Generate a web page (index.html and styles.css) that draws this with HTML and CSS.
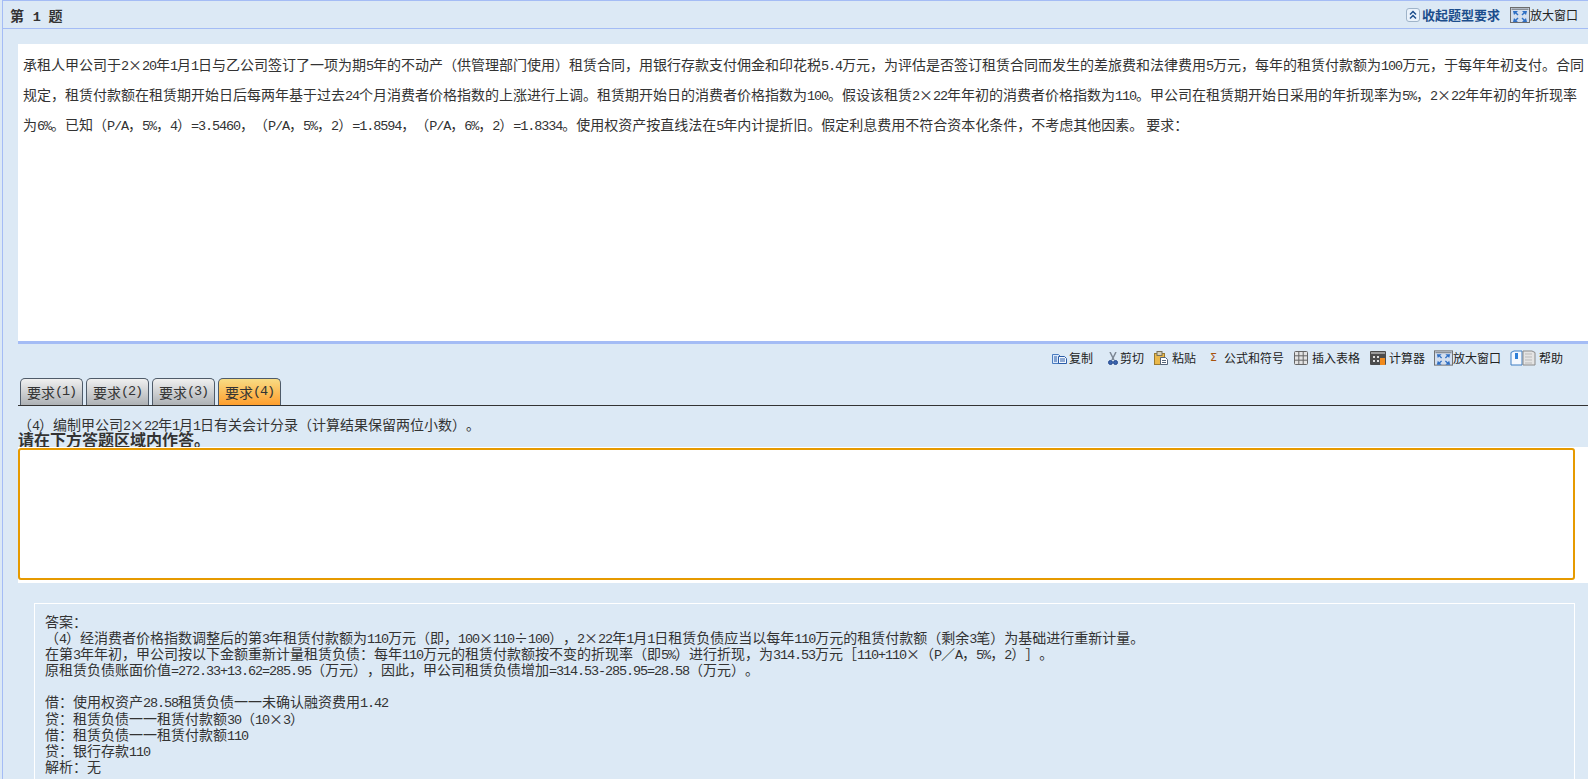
FILE: index.html
```html
<!DOCTYPE html>
<html lang="zh-CN">
<head>
    <meta charset="UTF-8">
    <title>第 1 题</title>
    <link rel="stylesheet" href="styles.css">
</head>
<body>
<div class="page">
    <div class="head">
        <div class="head-title">第 <span class="num-bold">1</span> 题</div>
        <div class="head-tools">
            <a class="collapse">
                <svg width="14" height="14" viewBox="0 0 14 14"><rect x=".5" y=".5" width="13" height="13" rx="2.5" fill="#eaf2fb" stroke="#9fb4c9"/><path d="M4 6.5 7 3.5 10 6.5M4 10.5 7 7.5 10 10.5" fill="none" stroke="#1c4e8c" stroke-width="1.5"/></svg>
                收起题型要求
            </a>
            <a class="tool tool-zoom-top">
                <svg width="20" height="16" viewBox="0 0 20 16"><rect x=".5" y=".5" width="19" height="15" fill="#d3deee" stroke="#6d6d6d"/><rect x="1.500" y="1.500" width="17" height="1.500" fill="#8a8f96"/><path d="M3 4h5l-1.500 1.500 2 2-1 1-2-2L4 8zM17 4h-5l1.500 1.500-2 2 1 1 2-2L16 8zM3 15h5l-1.500-1.500 2-2-1-1-2 2L4 11zM17 15h-5l1.500-1.500-2-2 1-1 2 2L16 11z" fill="#2f6fc4"/></svg>
                放大窗口
            </a>
        </div>
    </div>

    <div class="question">
        承租人甲公司于<span class="n">2</span>×<span class="n">20</span>年<span class="n">1</span>月<span class="n">1</span>日与乙公司签订了一项为期<span class="n">5</span>年的不动产（供管理部门使用）租赁合同，用银行存款支付佣金和印花税<span class="n">5.4</span>万元，为评估是否签订租赁合同而发生的差旅费和法律费用<span class="n">5</span>万元，每年的租赁付款额为<span class="n">100</span>万元，于每年年初支付。合同规定，租赁付款额在租赁期开始日后每两年基于过去<span class="n">24</span>个月消费者价格指数的上涨进行上调。租赁期开始日的消费者价格指数为<span class="n">100</span>。假设该租赁<span class="n">2</span>×<span class="n">22</span>年年初的消费者价格指数为<span class="n">110</span>。甲公司在租赁期开始日采用的年折现率为<span class="n">5%</span>，<span class="n">2</span>×<span class="n">22</span>年年初的年折现率为<span class="n">6%</span>。已知（<span class="n">P/A</span>，<span class="n">5%</span>，<span class="n">4</span>）<span class="n">=3.5460</span>，（<span class="n">P/A</span>，<span class="n">5%</span>，<span class="n">2</span>）<span class="n">=1.8594</span>，（<span class="n">P/A</span>，<span class="n">6%</span>，<span class="n">2</span>）<span class="n">=1.8334</span>。使用权资产按直线法在<span class="n">5</span>年内计提折旧。假定利息费用不符合资本化条件，不考虑其他因素。 要求：
    </div>

    <div class="toolbar">
        <a class="tool">
            <svg width="15" height="12" viewBox="0 0 15 12"><path d="M.5 2.500h6l2 2v7h-8z" fill="#dbe9fb" stroke="#4a7cc0"/><path d="M6.500 4.500h6l2 2v5h-8z" fill="#f4f8fe" stroke="#2a5ca8"/><path d="M8 7h5M8 9h5M2 5h3M2 7h3M2 9h3" stroke="#2a5ca8"/></svg>
            复制
        </a>
        <a class="tool tool-cut">
            <svg width="10" height="13" viewBox="0 0 10 13"><path d="M2 0 6 8M8 0 4 8" stroke="#7d8794" stroke-width="1.5"/><circle cx="2.500" cy="10.500" r="2" fill="#3a64b0" stroke="#24488c"/><circle cx="7.500" cy="10.500" r="2" fill="#3a64b0" stroke="#24488c"/></svg>
            剪切
        </a>
        <a class="tool tool-paste">
            <svg width="14" height="14" viewBox="0 0 14 14"><rect x=".5" y="2.500" width="10" height="11" fill="#eab84a" stroke="#9a7a30"/><rect x="3" y=".5" width="5" height="4" fill="#d9d2b8" stroke="#77705a"/><path d="M6.500 6.500h5l2 2v5h-7z" fill="#fff" stroke="#55657a"/><path d="M8 9.500h4M8 11.500h4" stroke="#55657a"/></svg>
            粘贴
        </a>
        <a class="tool tool-sum">
            <span class="sigma">Σ</span>
            公式和符号
        </a>
        <a class="tool tool-table">
            <svg width="14" height="14" viewBox="0 0 14 14"><rect x=".5" y=".5" width="13" height="13" rx="1" fill="#e3e3e3" stroke="#666"/><path d="M4.800 1v12M9.200 1v12M1 4.800h12M1 9.200h12" stroke="#666"/></svg>
            插入表格
        </a>
        <a class="tool tool-calc">
            <svg width="16" height="14" viewBox="0 0 16 14"><rect width="16" height="14" rx="1" fill="#4c4c4c"/><rect x="1" y="1" width="14" height="2" fill="#9a9a9a"/><path d="M3 5h2v2H3zM7 5h2v2H7zM3 9h2v2H3zM7 9h2v2H7z" fill="#ddd"/><rect x="10" y="7" width="5" height="7" fill="#f08a1d"/></svg>
            计算器
        </a>
        <a class="tool tool-zoom">
            <svg width="19" height="16" viewBox="0 0 20 16"><rect x=".5" y=".5" width="19" height="15" fill="#d3deee" stroke="#6d6d6d"/><rect x="1.500" y="1.500" width="17" height="1.500" fill="#8a8f96"/><path d="M3 4h5l-1.500 1.500 2 2-1 1-2-2L4 8zM17 4h-5l1.500 1.500-2 2 1 1 2-2L16 8zM3 15h5l-1.500-1.500 2-2-1-1-2 2L4 11zM17 15h-5l1.500-1.500-2-2 1-1 2 2L16 11z" fill="#2f6fc4"/></svg>
            放大窗口
        </a>
        <a class="tool tool-help">
            <svg width="26" height="16" viewBox="0 0 26 16"><path d="M1 2.500 4 1h8v14H1z" fill="#f4f8fe" stroke="#3f7fc4"/><rect x="5" y="3" width="3" height="6" fill="#2f7fd8"/><path d="M13 1h9l3 1.500V15H13z" fill="#e4e4e4" stroke="#8a8a8a"/><path d="M15 4h7M15 7h7M15 10h7M15 13h7" stroke="#bbb"/></svg>
            帮助
        </a>
    </div>

    <div class="tabs">
        <a class="tab">要求<span class="n">(1)</span></a>
        <a class="tab">要求<span class="n">(2)</span></a>
        <a class="tab">要求<span class="n">(3)</span></a>
        <a class="tab active">要求<span class="n">(4)</span></a>
    </div>

    <div class="ask">（<span class="n">4</span>）编制甲公司<span class="n">2</span>×<span class="n">22</span>年<span class="n">1</span>月<span class="n">1</span>日有关会计分录（计算结果保留两位小数）。</div>
    <div class="ask-tip">请在下方答题区域内作答。</div>

    <div class="answer-wrap">
        <textarea class="answer-input"></textarea>
    </div>

    <div class="result">
        答案：<br>
        （<span class="n">4</span>）经消费者价格指数调整后的第<span class="n">3</span>年租赁付款额为<span class="n">110</span>万元（即，<span class="n">100</span>×<span class="n">110</span>÷<span class="n">100</span>），<span class="n">2</span>×<span class="n">22</span>年<span class="n">1</span>月<span class="n">1</span>日租赁负债应当以每年<span class="n">110</span>万元的租赁付款额（剩余<span class="n">3</span>笔）为基础进行重新计量。<br>
        在第<span class="n">3</span>年年初，甲公司按以下金额重新计量租赁负债：每年<span class="n">110</span>万元的租赁付款额按不变的折现率（即<span class="n">5%</span>）进行折现，为<span class="n">314.53</span>万元［<span class="n">110+110</span>×（<span class="n">P</span>／<span class="n">A</span>，<span class="n">5%</span>，<span class="n">2</span>）］。<br>
        原租赁负债账面价值<span class="n">=272.33+13.62=285.95</span>（万元），因此，甲公司租赁负债增加<span class="n">=314.53-285.95=28.58</span>（万元）。<br>
        <br>
        借：使用权资产<span class="n">28.58</span>租赁负债一一未确认融资费用<span class="n">1.42</span><br>
        贷：租赁负债一一租赁付款额<span class="n">30</span>（<span class="n">10</span>×<span class="n">3</span>）<br>
        借：租赁负债一一租赁付款额<span class="n">110</span><br>
        贷：银行存款<span class="n">110</span><br>
        解析：无
    </div>
</div>
</body>
</html>
```

FILE: styles.css
```css
html, body {
    height: 779px;
    overflow: hidden;
}
body {
    margin: 0;
    background: #dce9f5;
    color: #333;
    font-family: "Noto Sans CJK SC", sans-serif;
    font-size: 14px;
    text-spacing-trim: space-all;
}
.n {
    font-family: "Liberation Mono", monospace;
    font-size: 13.5px;
    letter-spacing: -1.1px;
    line-height: 0;
}
.page {
    margin-left: 2px;
    height: 779px;
    border-left: 1px solid #a4bcf5;
    border-top: 1px solid #a4bcf5;
    box-sizing: border-box;
    overflow: hidden;
}
.head {
    display: flex;
    justify-content: space-between;
    align-items: center;
    height: 27px;
    padding: 0 10px 0 7px;
    border-bottom: 1px solid #a4bcf5;
}
.head-title {
    font-weight: bold;
    word-spacing: 5.5px;
}
.num-bold {
    font-family: "Liberation Mono", monospace;
    font-size: 13.5px;
    font-weight: bold;
    letter-spacing: -1.1px;
    line-height: 0;
}
.head-tools {
    display: flex;
    align-items: center;
    gap: 10px;
}
.collapse {
    display: flex;
    align-items: center;
    gap: 2px;
    color: #1c4e8c;
    font-size: 13px;
    font-weight: bold;
}
.tool {
    display: flex;
    align-items: center;
    gap: 2px;
    color: #222;
    font-size: 12px;
    line-height: 16px;
}
.tool-zoom-top {
    gap: 0;
}
.question {
    margin: 15px 0 0 15px;
    height: 300px;
    padding: 5px 3px 0 5px;
    box-sizing: border-box;
    background: #fff;
    line-height: 30px;
    border-bottom: 3px solid #a4bcf5;
}
.toolbar {
    display: flex;
    justify-content: flex-end;
    align-items: center;
    height: 34px;
    padding: 0 25px 6px 0;
    box-sizing: border-box;
}
.tool-cut {
    margin-left: 15px;
}
.tool-paste {
    margin-left: 10px;
    gap: 4px;
}
.tool-sum {
    margin-left: 14px;
    gap: 5px;
}
.tool-table {
    margin-left: 10px;
    gap: 4px;
}
.tool-calc {
    margin-left: 10px;
    gap: 3px;
}
.tool-zoom {
    margin-left: 9px;
    gap: 0;
}
.tool-help {
    margin-left: 9px;
    gap: 3px;
}
.sigma {
    width: 9px;
    color: #a8530c;
    font-family: "DejaVu Sans", sans-serif;
    font-size: 11px;
}
.tabs {
    display: flex;
    gap: 3px;
    margin-left: 15px;
    padding-left: 2px;
    height: 27px;
    border-bottom: 1px solid #333;
}
.tab {
    display: flex;
    align-items: center;
    justify-content: center;
    width: 63px;
    box-sizing: border-box;
    border: 1px solid #4f5b69;
    border-bottom: 0;
    border-radius: 5px 5px 0 0;
    background: linear-gradient(#f0f0f0, #adb1b5);
}
.tab.active {
    background: linear-gradient(#f8dc84, #ff9f2e);
}
.ask {
    margin: 10px 0 0 15px;
    line-height: 16px;
}
.ask-tip {
    margin: -1px 0 0 15px;
    height: 16px;
    overflow: hidden;
    font-size: 16px;
    font-weight: bold;
    line-height: 16px;
}
.answer-wrap {
    margin-left: 15px;
    padding: 1px 13px 3px 0;
    background: #fff;
}
.answer-input {
    display: block;
    width: 100%;
    height: 132px;
    box-sizing: border-box;
    border: 2px solid #e69a00;
    border-radius: 3px;
    background: #fff;
    outline: none;
    resize: none;
}
.result {
    margin: 20px 13px 0 31px;
    padding: 9px 10px 30px;
    border: 1px solid #fff;
    line-height: 16.1px;
}
```
